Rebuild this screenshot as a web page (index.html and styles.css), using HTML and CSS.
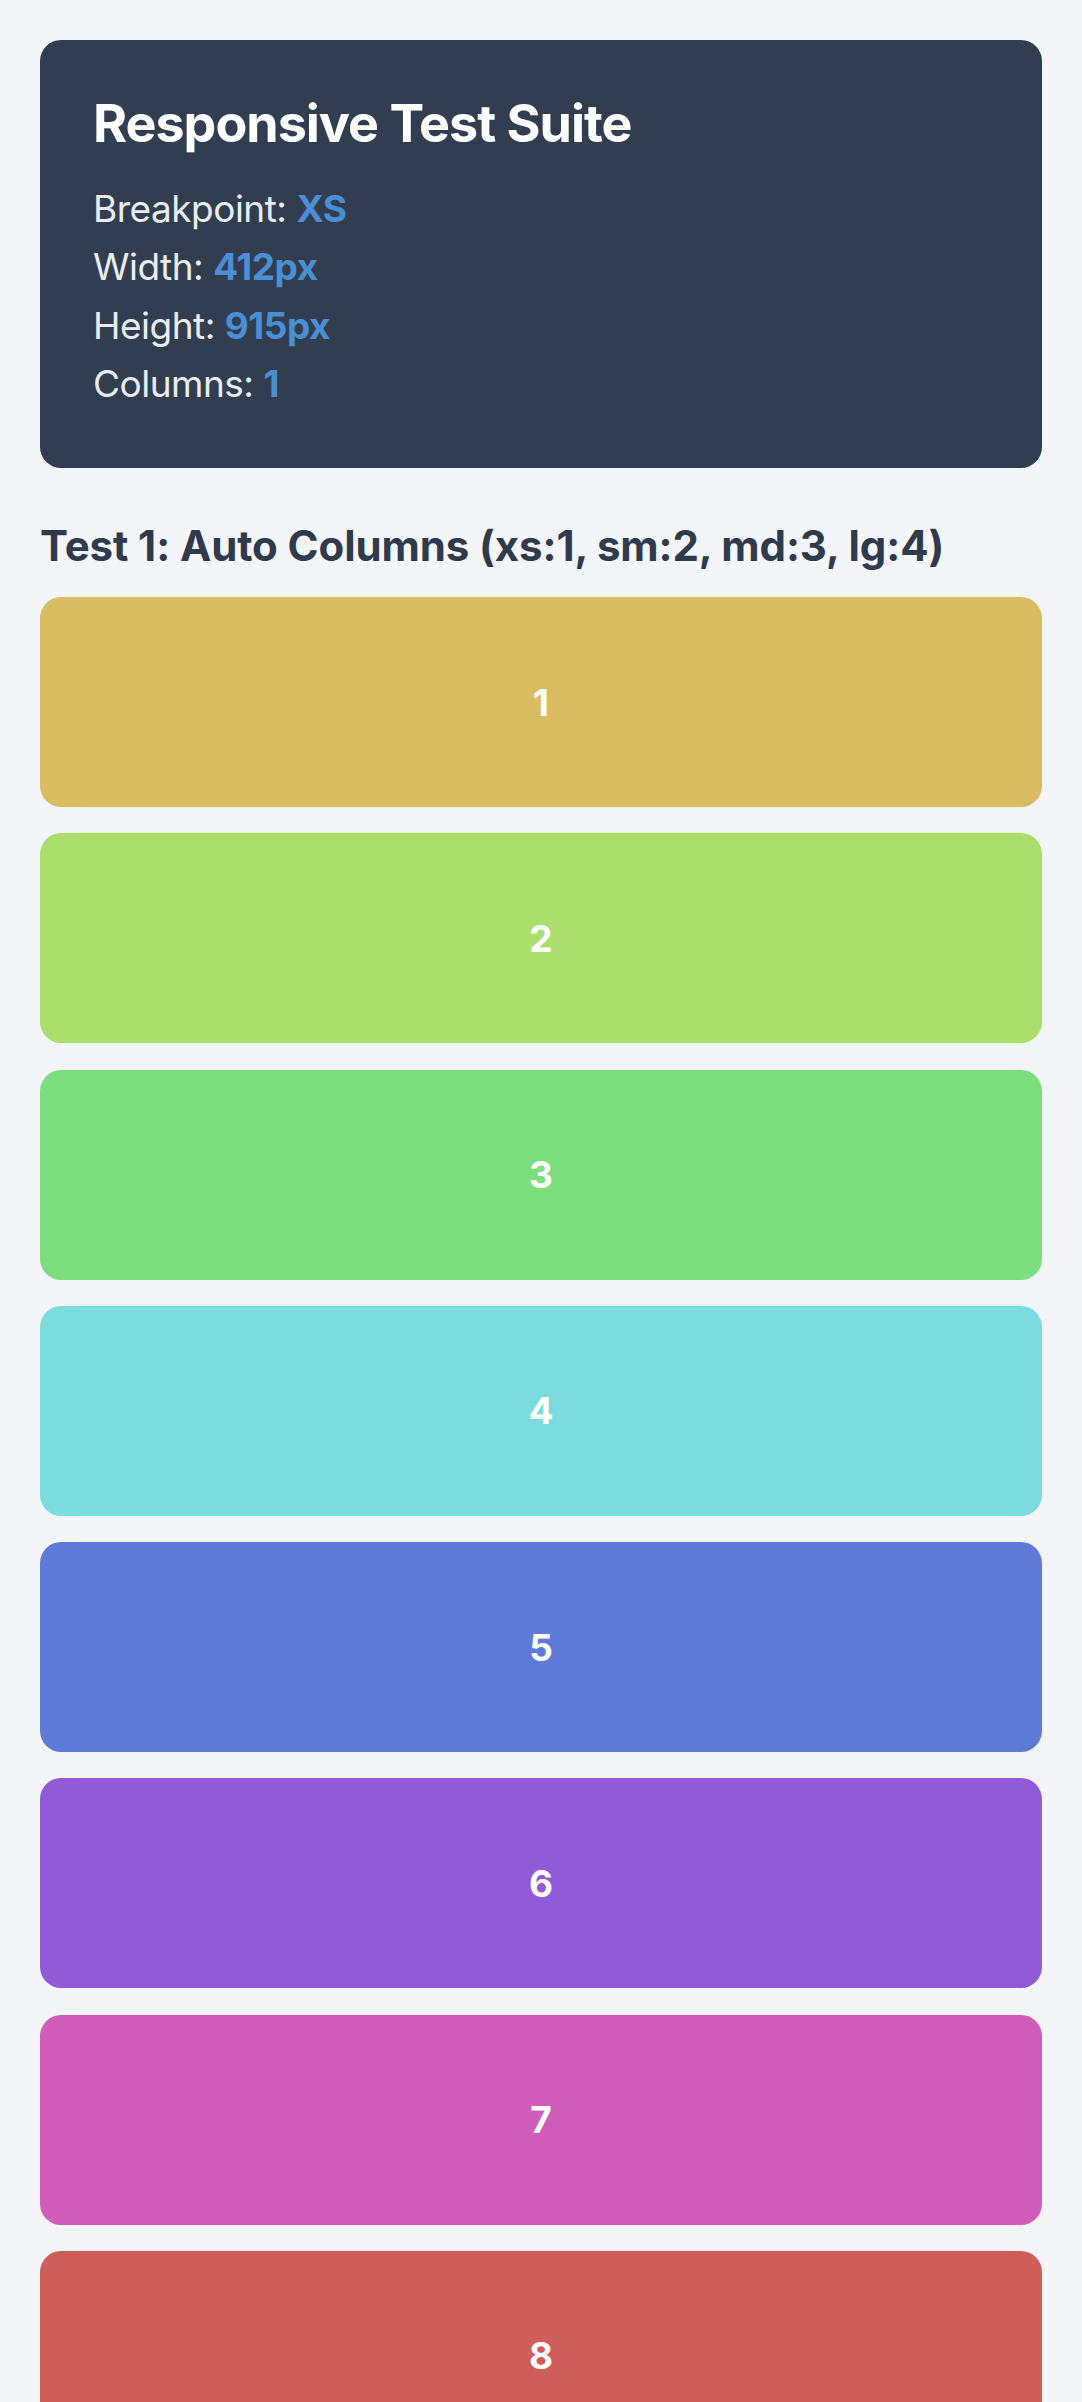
FILE: index.html
```html
<!DOCTYPE html>
<html lang="en">
<head>
<meta charset="utf-8">
<title>Responsive Test Suite</title>
<link rel="stylesheet" href="styles.css">
</head>
<body>
<main class="page">
  <section class="info-card">
    <h1 class="info-title">Responsive Test Suite</h1>
    <div class="info-lines">
      <div class="info-line">Breakpoint: <strong class="val">XS</strong></div>
      <div class="info-line">Width: <strong class="val">412px</strong></div>
      <div class="info-line">Height: <strong class="val">915px</strong></div>
      <div class="info-line">Columns: <strong class="val">1</strong></div>
    </div>
  </section>

  <h2 class="test-title">Test 1: Auto Columns (xs:1, sm:2, md:3, lg:4)</h2>
  <div class="grid">
    <div class="cell c1">1</div>
    <div class="cell c2">2</div>
    <div class="cell c3">3</div>
    <div class="cell c4">4</div>
    <div class="cell c5">5</div>
    <div class="cell c6">6</div>
    <div class="cell c7">7</div>
    <div class="cell c8">8</div>
  </div>
</main>
</body>
</html>
```

FILE: styles.css
```css
html, body {
  margin: 0;
  padding: 0;
  background: #f4f5f9;
}

body {
  font-family: Inter, "Noto Sans", "Liberation Sans", sans-serif;
  color: #2f3b4c;
}

.page {
  padding: 40px;
  display: flex;
  flex-direction: column;
}

.info-card {
  background: #323e50;
  border-radius: 21px;
  padding: 53px 52px 54px 53px;
  color: #e9edf1;
}

.info-title {
  margin: 0;
  font-size: 52px;
  line-height: 62.4px;
  font-weight: 700;
  color: #ffffff;
  letter-spacing: -1px;
}

.info-lines {
  margin-top: 24.5px;
  display: flex;
  flex-direction: column;
}

.info-line {
  font-size: 37px;
  line-height: 58.5px;
  font-weight: 400;
  letter-spacing: -0.5px;
}

.val {
  color: #4a8fd6;
  font-weight: 700;
}

.test-title {
  margin: 53px 0 25.7px;
  font-size: 42px;
  line-height: 50.4px;
  font-weight: 700;
  color: #2f3b4c;
  letter-spacing: -0.1px;
}

.grid {
  display: grid;
  grid-template-columns: 1fr;
  gap: 26.25px;
}

.cell {
  height: 210px;
  border-radius: 21px;
  display: flex;
  align-items: center;
  justify-content: center;
  color: #ffffff;
  font-size: 37px;
  font-weight: 700;
}

.c1 { background: hsl(45, 62%, 62%); }
.c2 { background: hsl(88, 64%, 65%); }
.c3 { background: hsl(121, 60%, 68%); }
.c4 { background: hsl(182, 60%, 68%); }
.c5 { background: hsl(226, 62%, 61%); }
.c6 { background: hsl(266, 62%, 60%); }
.c7 { background: hsl(312, 55%, 59%); }
.c8 { background: hsl(2, 55%, 58%); }
```
